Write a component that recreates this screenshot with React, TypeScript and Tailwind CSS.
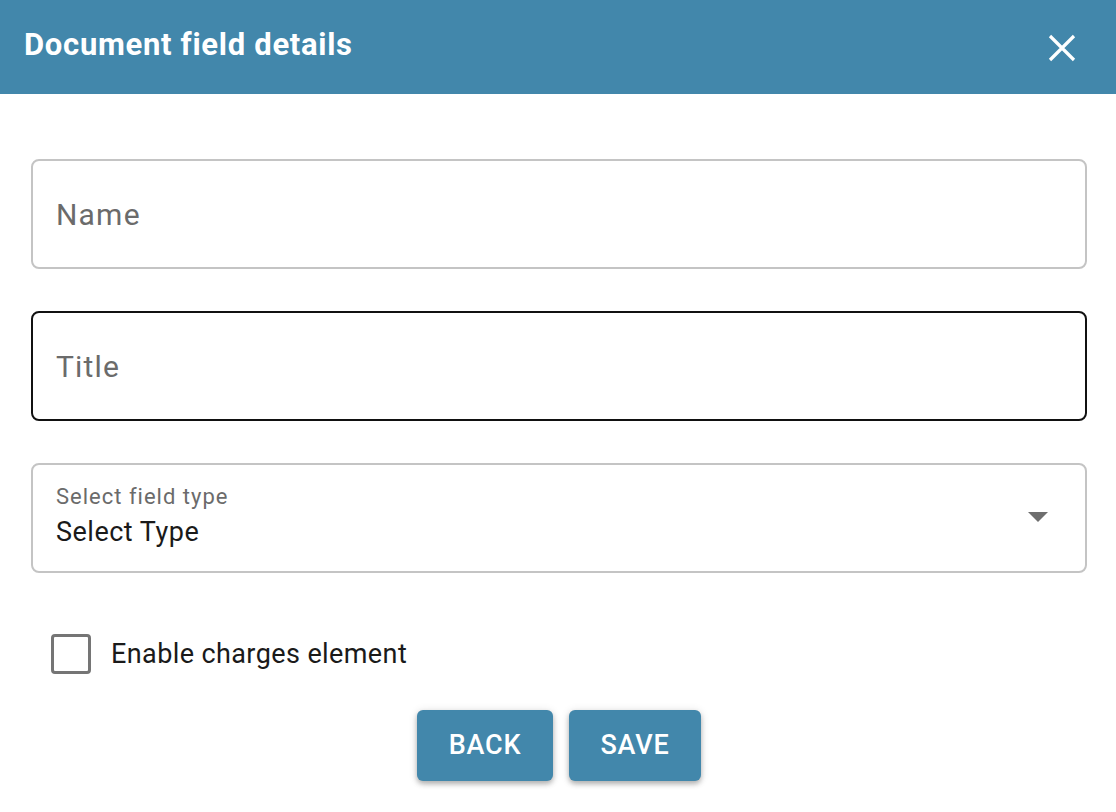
import React from "react";

export default function App() {
  return (
    <div className="w-[1116px] h-[812px] bg-white overflow-hidden" style={{ fontFamily: "Roboto, 'Liberation Sans', sans-serif" }}>
      <div className="h-[94px] bg-[#4287ab] flex items-center justify-between pl-[24px] pr-[40px]">
        <h1 className="text-white text-[31px] font-bold tracking-[0.7px] mb-[3px]">Document field details</h1>
        <svg width="28" height="28" viewBox="0 0 28 28" className="mt-[1px]">
          <path d="M2 2 L26 26 M26 2 L2 26" stroke="white" strokeWidth="3.2" strokeLinecap="butt" />
        </svg>
      </div>
      <div className="pl-[31px] pr-[29px] pt-[65px] flex flex-col">
        <div className="h-[110px] border-2 border-[#c4c4c4] rounded-[8px] flex items-center px-[23px]">
          <span className="text-[30px] text-[#6b6b6b] tracking-[1.2px]">Name</span>
        </div>
        <div className="mt-[42px] h-[110px] border-2 border-[#111] rounded-[8px] flex items-center px-[23px]">
          <span className="text-[30px] text-[#6b6b6b] tracking-[1.2px]">Title</span>
        </div>
        <div className="mt-[42px] h-[110px] border-2 border-[#c4c4c4] rounded-[8px] flex items-center justify-between pl-[23px] pr-[37px]">
          <div className="flex flex-col">
            <span className="text-[22px] leading-[26px] text-[#6b6b6b] tracking-[1px] -mt-[2px]">Select field type</span>
            <span className="text-[27px] leading-[36px] text-[#1a1a1a] mt-[4px] tracking-[0.5px]">Select Type</span>
          </div>
          <svg width="20" height="10" viewBox="0 0 20 10" className="mb-[2px]">
            <path d="M0 0 L20 0 L10 10 Z" fill="#6e6e6e" />
          </svg>
        </div>
        <div className="mt-[61px] flex items-center ml-[20px]">
          <div className="w-[40px] h-[40px] border-[3px] border-[#757575] rounded-[4px]" />
          <span className="ml-[20px] text-[27px] text-[#1a1a1a] tracking-[0.4px]">Enable charges element</span>
        </div>
        <div className="mt-[35px] flex justify-center gap-[16px]">
          <button className="w-[136px] h-[71px] bg-[#4287ab] text-white text-[27px] font-medium tracking-[0.8px] rounded-[6px] shadow-[0_3px_5px_rgba(0,0,0,0.25),0_1px_10px_rgba(0,0,0,0.12)]">BACK</button>
          <button className="w-[132px] h-[71px] bg-[#4287ab] text-white text-[27px] font-medium tracking-[0.8px] rounded-[6px] shadow-[0_3px_5px_rgba(0,0,0,0.25),0_1px_10px_rgba(0,0,0,0.12)]">SAVE</button>
        </div>
      </div>
    </div>
  );
}
